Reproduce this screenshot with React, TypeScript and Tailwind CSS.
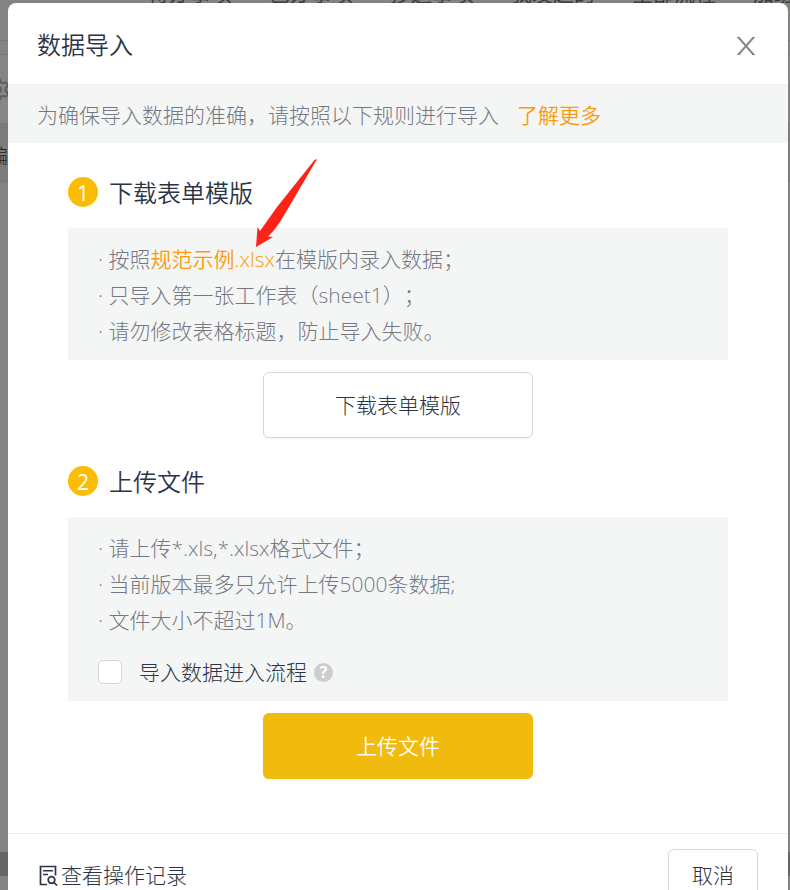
import { Settings } from 'lucide-react';

const tabs = ['待办事项', '已办事项', '抄送事项', '我发起的', '全部流程', '加班'];

const templateRules = ['只导入第一张工作表（sheet1）；', '请勿修改表格标题，防止导入失败。'];

const uploadRules = [
  '请上传*.xls,*.xlsx格式文件；',
  '当前版本最多只允许上传5000条数据;',
  '文件大小不超过1M。',
];

function StepTitle({ step, title }: { step: number; title: string }) {
  return (
    <h3 className="flex items-center gap-[11px] text-2xl leading-9 font-[350]">
      <span className="flex size-[30px] items-center justify-center rounded-full bg-[#fbbc05] pt-0.5 text-[21px] leading-none font-normal text-white">
        {step}
      </span>
      <span className="pt-0.5">{title}</span>
    </h3>
  );
}

function HistoryIcon() {
  return (
    <svg width="19" height="21" viewBox="0 0 19 21" fill="none" stroke="currentColor" strokeWidth="1.7">
      <path d="M8 19.5H1.5V1.5h15v9" />
      <path d="M4 5.8h10M4 9.5h5" strokeWidth="1.5" />
      <circle cx="12.5" cy="15" r="3.3" />
      <path d="M15 17.5l3 3" />
    </svg>
  );
}

function Arrow() {
  return (
    <svg className="pointer-events-none absolute top-[156px] left-[247px]" width="64" height="90" viewBox="0 0 64 90">
      <path d="M61.5 0L59.5 1L38 28L22 48L5 72L2.5 68L1 88L18 78L13 77.5Q20 71 25 63L38 41L61.5 1Z" fill="#ff2216" />
    </svg>
  );
}

export default function App() {
  return (
    <div className="relative h-screen overflow-hidden bg-[#838383] font-['Open_Sans','Noto_Sans_CJK_SC',sans-serif] font-light text-[#2b3445] [text-spacing-trim:space-all]">
      {/* page behind the dialog */}
      <div aria-hidden="true" className="absolute inset-0 flex flex-col">
        <div className="flex h-[41px] items-start border-b border-[#777777]">
          <div className="-mt-[21px] flex gap-[37px] pl-[148px] text-[21px] leading-7 font-normal whitespace-nowrap text-[#3c3c3c]">
            {tabs.map((tab) => (
              <span key={tab}>{tab}</span>
            ))}
          </div>
        </div>
        <div className="mt-[13px] flex h-[70px] items-center border-y border-[#777777] bg-[#858585]">
          <Settings className="-ml-4 size-[27px] text-[#5c5c5c]" strokeWidth={1.7} />
        </div>
        <div className="flex h-[58px] items-center border-b border-[#757575] bg-[#7c7c7c]">
          <span className="-ml-3 pt-2 text-xl text-[#222222]">编</span>
        </div>
        <div className="mt-auto mb-[14px] h-6 bg-[#656565]" />
      </div>

      <div
        role="dialog"
        aria-labelledby="dialog-title"
        className="relative mt-[3px] mr-[2px] ml-2 rounded-t-lg bg-white"
      >
        <header className="flex h-[82px] items-center justify-between border-b border-[#ebedee] pt-[3px] pr-8 pl-[29px]">
          <h2 id="dialog-title" className="text-2xl font-[350]">数据导入</h2>
          <button type="button" aria-label="关闭" className="pt-0.5 text-[#888888]">
            <svg width="20" height="20" viewBox="0 0 20 20" fill="none" stroke="currentColor" strokeWidth="2">
              <path d="M2.5 1.5l15 17M17.5 1.5l-15 17" />
              <path d="M1 1.5h3M16 1.5h3M1 18.5h3M16 18.5h3" strokeWidth="1" />
            </svg>
          </button>
        </header>

        <p className="flex h-[58px] items-center gap-[18px] bg-[#f4f6f6] px-[29px] pt-[3px] text-[21px] text-[#747883]">
          为确保导入数据的准确，请按照以下规则进行导入
          <a href="#more" className="font-[350] text-[#fb9a0b]">了解更多</a>
        </p>

        <div className="px-[60px] pt-[30px]">
          <StepTitle step={1} title="下载表单模版" />
          <ul className="mt-[17px] bg-[#f4f6f6] px-[30px] pt-[13px] pb-[11px] text-[21px] leading-9 text-[#747883]">
            <li>
              · 按照<a href="#sample" className="font-[350] text-[#fb9a0b]">规范示例.xlsx</a>在模版内录入数据；
            </li>
            {templateRules.map((rule) => (
              <li key={rule}>· {rule}</li>
            ))}
          </ul>
          <button
            type="button"
            className="mx-auto mt-3 block h-[66px] w-[270px] rounded-md border border-[#d4d6d9] bg-white pt-0.5 text-[21px] shadow-xs"
          >
            下载表单模版
          </button>

          <div className="mt-6">
            <StepTitle step={2} title="上传文件" />
          </div>
          <div className="mt-[17px] bg-[#f4f6f6] px-[30px] pt-[13px] pb-[11px] text-[21px]">
            <ul className="leading-9 text-[#747883]">
              {uploadRules.map((rule) => (
                <li key={rule}>· {rule}</li>
              ))}
            </ul>
            <div className="mt-4 flex h-9 items-center">
              <label className="flex items-center gap-[17px]">
                <input
                  type="checkbox"
                  className="size-6 appearance-none rounded-[5px] border border-[#d4d6d9] bg-white checked:bg-[#f1bb0d]"
                />
                <span className="pt-0.5">导入数据进入流程</span>
              </label>
              <button
                type="button"
                aria-label="帮助"
                className="ml-[7px] flex size-[19px] items-center justify-center rounded-full bg-[#cccdd0] text-base leading-none font-bold text-white"
              >
                ?
              </button>
            </div>
          </div>
          <button
            type="button"
            className="mx-auto mt-3 block h-[66px] w-[270px] rounded-md bg-[#f1bb0d] pt-0.5 text-[21px] font-[350] text-white shadow-xs"
          >
            上传文件
          </button>
        </div>

        <footer className="mt-[54px] flex items-start justify-between border-t border-[#ebedee] pt-[15px] pr-[30px] pb-4 pl-[31px] text-[21px]">
          <button type="button" className="mt-2 flex items-center gap-[3px] leading-9">
            <HistoryIcon />
            查看操作记录
          </button>
          <button type="button" className="h-[54px] w-[90px] rounded-md border border-[#d4d6d9]">取消</button>
        </footer>

        <Arrow />
      </div>
    </div>
  );
}
